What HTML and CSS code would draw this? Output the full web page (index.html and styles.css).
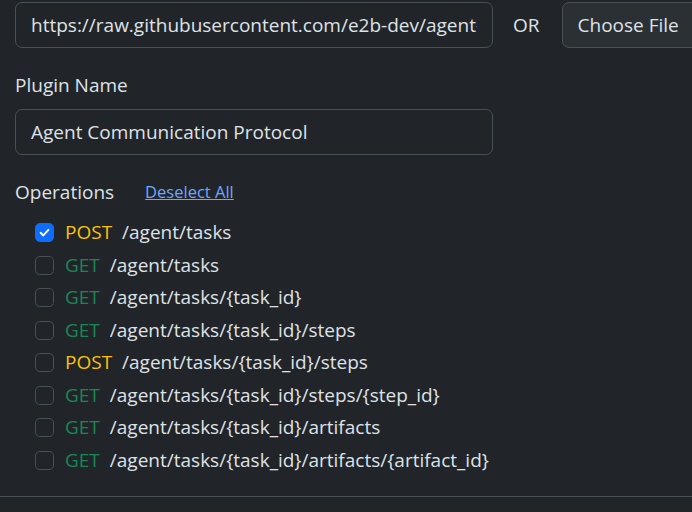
FILE: index.html
```html
<!DOCTYPE html>
<html>
<head>
<meta charset="utf-8">
<link rel="stylesheet" href="styles.css">
</head>
<body>
<div class="page">
  <div class="source-row">
    <div class="input url-input"><span class="url-text">https://raw.githubusercontent.com/e2b-dev/agent-protocol/main/schemas/openapi.yml</span></div>
    <span class="or">OR</span>
    <div class="btn-file">Choose File</div>
  </div>
  <div class="label">Plugin Name</div>
  <div class="input name-input">Agent Communication Protocol</div>
  <div class="ops-head">
    <span class="ops-label">Operations</span>
    <a class="link" href="#">Deselect All</a>
  </div>
  <ul class="ops">
    <li><span class="check checked"><svg viewBox="0 0 20 20" width="13" height="13"><path d="M4 10.5 L8.2 14.5 L16 6" fill="none" stroke="#fff" stroke-width="3" stroke-linecap="round" stroke-linejoin="round"/></svg></span><span class="m post">POST</span><span class="p">/agent/tasks</span></li>
    <li><span class="check"></span><span class="m get">GET</span><span class="p">/agent/tasks</span></li>
    <li><span class="check"></span><span class="m get">GET</span><span class="p">/agent/tasks/{task_id}</span></li>
    <li><span class="check"></span><span class="m get">GET</span><span class="p">/agent/tasks/{task_id}/steps</span></li>
    <li><span class="check"></span><span class="m post">POST</span><span class="p">/agent/tasks/{task_id}/steps</span></li>
    <li><span class="check"></span><span class="m get">GET</span><span class="p">/agent/tasks/{task_id}/steps/{step_id}</span></li>
    <li><span class="check"></span><span class="m get">GET</span><span class="p">/agent/tasks/{task_id}/artifacts</span></li>
    <li><span class="check"></span><span class="m get">GET</span><span class="p">/agent/tasks/{task_id}/artifacts/{artifact_id}</span></li>
  </ul>
  <div class="divider"></div>
</div>
</body>
</html>
```
FILE: styles.css
```css
html, body {
  margin: 0;
  padding: 0;
  background: #212529;
  overflow: hidden;
}
body {
  font-family: "Open Sans", "Noto Sans", sans-serif;
  font-size: 19px;
  color: #dee2e6;
  line-height: 28.8px;
}
.page {
  padding-top: 2px;
  width: 692px;
  overflow: hidden;
}
.source-row {
  display: flex;
  align-items: center;
  padding-left: 15px;
  white-space: nowrap;
  width: 900px;
}
.input {
  box-sizing: border-box;
  height: 46px;
  border: 1px solid #495057;
  border-radius: 7px;
  padding: 8px 15px 6px;
  background: #212529;
  overflow: hidden;
  white-space: nowrap;
}
.url-input {
  width: 478px;
  flex: none;
}
.url-text {
  display: block;
  width: 446px;
  overflow: hidden;
}
.or {
  margin-left: 20px;
  margin-right: 22px;
  flex: none;
}
.btn-file {
  box-sizing: border-box;
  height: 46px;
  border: 1px solid #495057;
  border-radius: 7px;
  padding: 8px 15px 6px;
  background: #2b3035;
  flex: none;
  width: 200px;
}
.label {
  margin: 23px 0 9px 15px;
}
.name-input {
  width: 478px;
  margin-left: 15px;
}
.ops-head {
  display: flex;
  align-items: center;
  margin: 23px 0 0 15px;
}
.link {
  margin-left: 31px;
  color: #6ea8fe;
  font-size: 16.5px;
  text-decoration: underline;
}
.ops {
  list-style: none;
  margin: 10px 0 0 0;
  padding: 0 0 0 35px;
}
.ops li {
  display: flex;
  align-items: center;
  height: 32.5px;
}
.check {
  box-sizing: border-box;
  width: 19px;
  height: 19px;
  border: 1px solid #495057;
  border-radius: 4.8px;
  margin-right: 11px;
  display: flex;
  align-items: center;
  justify-content: center;
  flex: none;
}
.check.checked {
  background: #0d6efd;
  border-color: #0d6efd;
}
.m {
  margin-right: 10px;
}
.post { color: #ffc107; }
.get { color: #198754; }
.divider {
  margin-top: 19px;
  border-top: 1px solid #495057;
}
```
